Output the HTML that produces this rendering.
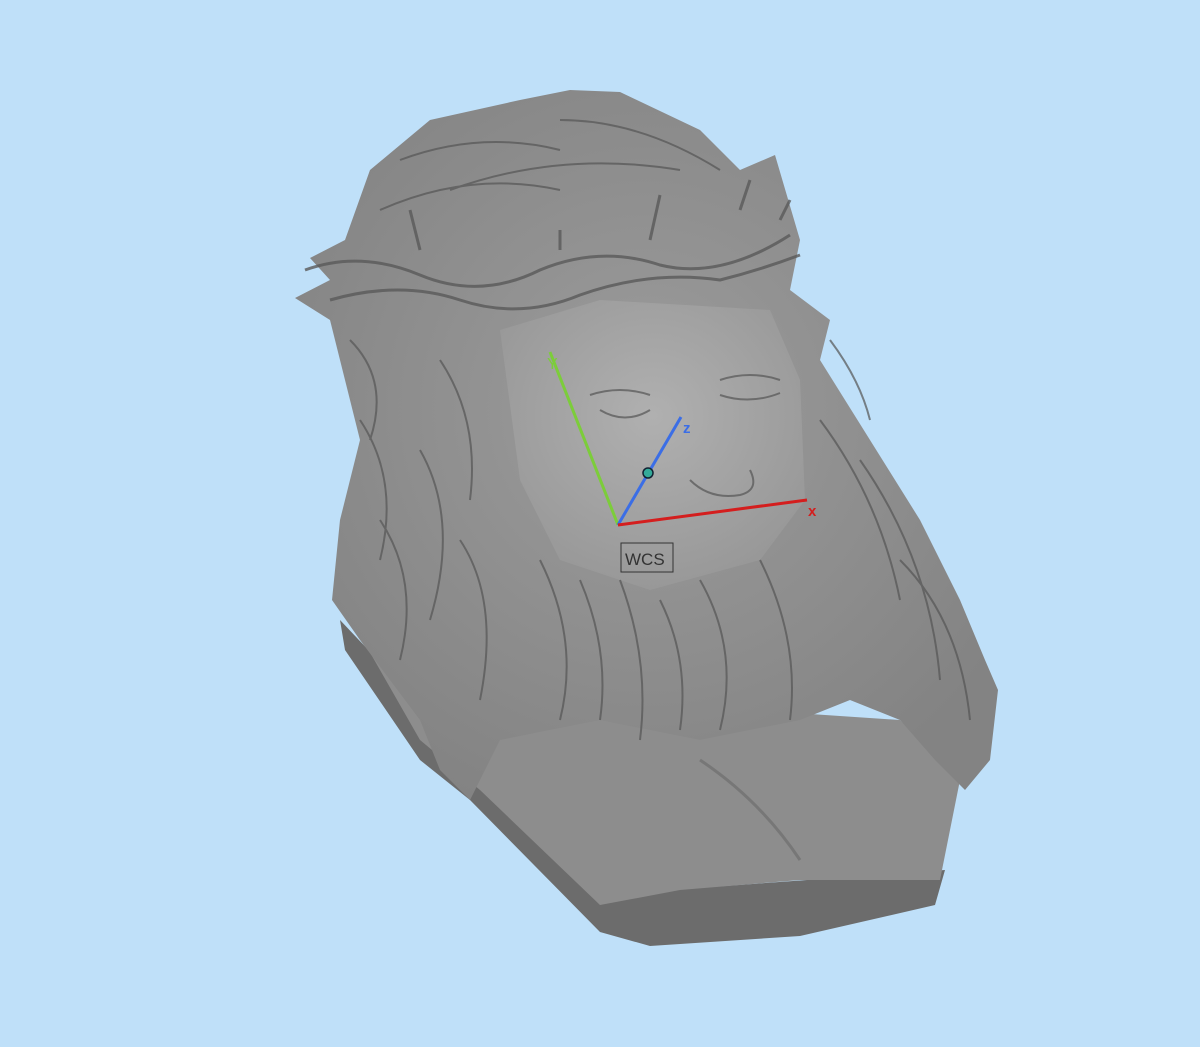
<!DOCTYPE html>
<html><head><meta charset="utf-8"><style>
html,body{margin:0;padding:0;width:1200px;height:1047px;overflow:hidden;background:#bfe0f9;}
svg{display:block}
</style></head><body>
<svg width="1200" height="1047" viewBox="0 0 1200 1047">
<defs>
<radialGradient id="g" cx="0.5" cy="0.45" r="0.6">
<stop offset="0" stop-color="#9c9c9c"/><stop offset="1" stop-color="#838383"/>
</radialGradient>
<radialGradient id="f" cx="0.5" cy="0.4" r="0.6">
<stop offset="0" stop-color="#b0b0b0"/><stop offset="1" stop-color="#989898"/>
</radialGradient>
</defs>
<!-- base plate side -->
<path d="M340 620 L345 650 L420 760 L470 800 L600 932 L650 946 L800 936 L935 905 L945 870 L600 895 Z" fill="#6c6c6c"/>
<!-- bust/base top -->
<path d="M340 600 L420 740 L480 790 L600 905 L680 890 L800 880 L940 880 L960 780 L900 720 L600 700 L420 640 Z" fill="#8d8d8d"/>
<path d="M700 760 Q760 800 800 860" stroke="#777" stroke-width="3" fill="none"/>
<!-- head and hair silhouette -->
<path d="M520 100 L570 90 L620 92 L700 130 L740 170 L775 155 L800 240 L790 290 L830 320 L820 360 L870 440 L920 520 L960 600 L985 660 L998 690 L990 760 L965 790 L935 760 L900 720 L850 700 L800 720 L700 740 L600 720 L500 740 L470 800 L440 770 L420 720 L360 640 L332 600 L340 520 L360 440 L345 380 L330 320 L295 298 L330 280 L310 258 L345 240 L370 170 L430 120 Z" fill="url(#g)"/>
<!-- face lighter -->
<path d="M500 330 L600 300 L770 310 L800 380 L805 500 L760 560 L650 590 L560 560 L520 480 Z" fill="url(#f)"/>
<!-- crown texture -->
<g stroke="#5a5a5a" stroke-width="3" fill="none" opacity="0.8">
<path d="M305 270 Q360 250 420 275 Q480 300 540 270 Q600 245 660 265 Q720 280 790 235"/>
<path d="M330 300 Q400 280 460 300 Q520 320 580 295 Q650 270 720 280 Q760 270 800 255"/>
<path d="M420 250 L410 210 M560 250 L560 230 M650 240 L660 195 M740 210 L750 180 M780 220 L790 200"/>
</g>
<!-- hair texture -->
<g stroke="#555" stroke-width="2" fill="none" opacity="0.7">
<path d="M360 420 Q400 480 380 560"/><path d="M420 450 Q460 520 430 620"/>
<path d="M350 340 Q390 380 370 440"/><path d="M440 360 Q480 420 470 500"/>
<path d="M380 520 Q420 580 400 660"/><path d="M460 540 Q500 600 480 700"/>
<path d="M820 420 Q880 500 900 600"/><path d="M860 460 Q930 560 940 680"/>
<path d="M830 340 Q860 380 870 420"/><path d="M900 560 Q960 620 970 720"/>
<path d="M540 560 Q580 640 560 720"/><path d="M620 580 Q650 660 640 740"/>
<path d="M700 580 Q740 650 720 730"/><path d="M760 560 Q800 640 790 720"/>
<path d="M580 580 Q610 650 600 720"/><path d="M660 600 Q690 660 680 730"/>
<path d="M400 160 Q480 130 560 150"/><path d="M450 190 Q560 150 680 170"/>
<path d="M380 210 Q470 170 560 190"/><path d="M560 120 Q640 120 720 170"/>
<path d="M590 395 Q620 385 650 395"/><path d="M720 380 Q750 370 780 380"/>
<path d="M600 410 Q625 425 650 410"/><path d="M720 395 Q750 405 780 393"/>
<path d="M690 480 Q710 500 740 495 Q760 490 750 470"/>
</g>
<!-- axes -->
<line x1="618" y1="525" x2="550" y2="352" stroke="#7ccd3a" stroke-width="3"/>
<text x="547" y="369" font-family="Liberation Sans, sans-serif" font-size="16" fill="#7ccd3a">Y</text>
<line x1="618" y1="525" x2="681" y2="417" stroke="#3b6ee6" stroke-width="3"/>
<text x="683" y="433" font-family="Liberation Sans, sans-serif" font-size="15" font-weight="bold" fill="#3b6ee6">z</text>
<line x1="618" y1="525" x2="807" y2="500" stroke="#d41e1e" stroke-width="3"/>
<text x="808" y="516" font-family="Liberation Sans, sans-serif" font-size="15" font-weight="bold" fill="#d41e1e">x</text>
<circle cx="648" cy="473" r="5" fill="#3a9" stroke="#123" stroke-width="1.5"/>
<rect x="621" y="543" width="52" height="29" fill="none" stroke="#333" stroke-width="1"/>
<text x="625" y="565" font-family="Liberation Sans, sans-serif" font-size="17" fill="#333">WCS</text>
</svg>
</body></html>
